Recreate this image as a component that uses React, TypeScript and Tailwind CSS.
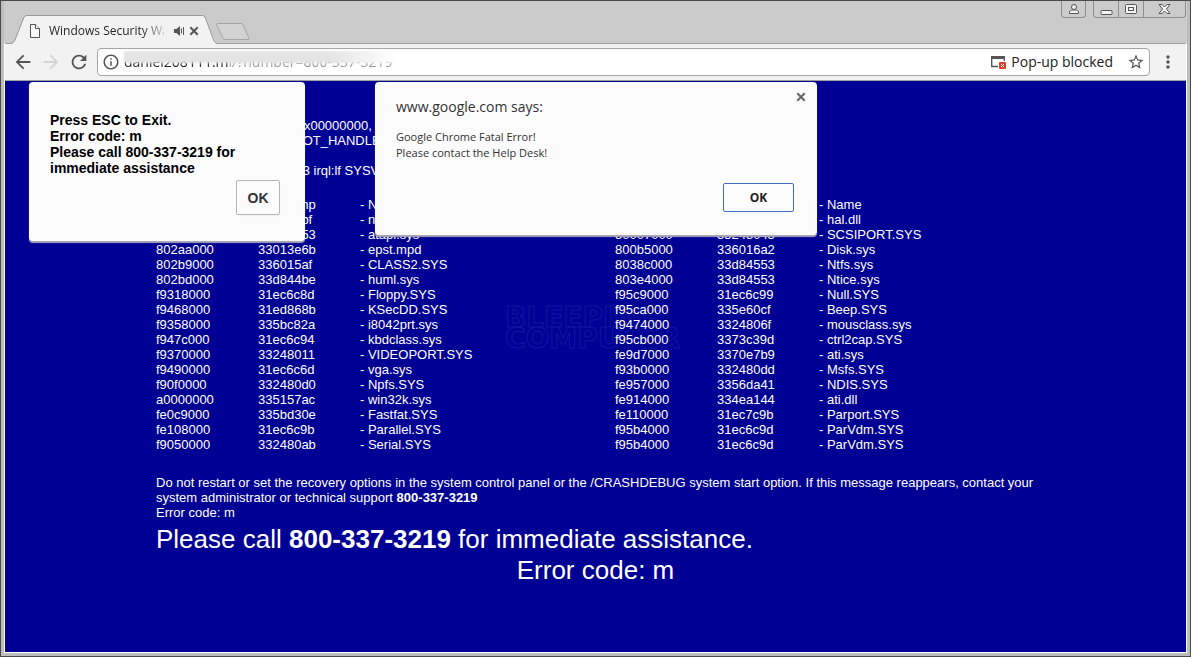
import React from 'react'
import { MdArrowBack, MdArrowForward, MdRefresh, MdInfoOutline, MdStarBorder, MdMoreVert } from 'react-icons/md'

const drivers = [
  ['Dll Base', 'DateStmp', 'Name', 'Dll Base', 'DateStmp', 'Name'],
  ['80100000', '336546bf', 'ntoskrnl.exe', '80010000', '33247f88', 'hal.dll'],
  ['80000100', '334d3a53', 'atapi.sys', '80007000', '33248043', 'SCSIPORT.SYS'],
  ['802aa000', '33013e6b', 'epst.mpd', '800b5000', '336016a2', 'Disk.sys'],
  ['802b9000', '336015af', 'CLASS2.SYS', '8038c000', '33d84553', 'Ntfs.sys'],
  ['802bd000', '33d844be', 'huml.sys', '803e4000', '33d84553', 'Ntice.sys'],
  ['f9318000', '31ec6c8d', 'Floppy.SYS', 'f95c9000', '31ec6c99', 'Null.SYS'],
  ['f9468000', '31ed868b', 'KSecDD.SYS', 'f95ca000', '335e60cf', 'Beep.SYS'],
  ['f9358000', '335bc82a', 'i8042prt.sys', 'f9474000', '3324806f', 'mousclass.sys'],
  ['f947c000', '31ec6c94', 'kbdclass.sys', 'f95cb000', '3373c39d', 'ctrl2cap.SYS'],
  ['f9370000', '33248011', 'VIDEOPORT.SYS', 'fe9d7000', '3370e7b9', 'ati.sys'],
  ['f9490000', '31ec6c6d', 'vga.sys', 'f93b0000', '332480dd', 'Msfs.SYS'],
  ['f90f0000', '332480d0', 'Npfs.SYS', 'fe957000', '3356da41', 'NDIS.SYS'],
  ['a0000000', '335157ac', 'win32k.sys', 'fe914000', '334ea144', 'ati.dll'],
  ['fe0c9000', '335bd30e', 'Fastfat.SYS', 'fe110000', '31ec7c9b', 'Parport.SYS'],
  ['fe108000', '31ec6c9b', 'Parallel.SYS', 'f95b4000', '31ec6c9d', 'ParVdm.SYS'],
  ['f9050000', '332480ab', 'Serial.SYS', 'f95b4000', '31ec6c9d', 'ParVdm.SYS'],
]

const CloseIcon = () => {
  return (
    <svg width="14" height="14" viewBox="0 0 14 14" fill="none" stroke="currentColor" strokeWidth="2">
      <path d="M3.300 3.300l7.400 7.400M10.700 3.300l-7.400 7.400" />
    </svg>
  )
}

const WindowButtons = () => {
  return (
    <div className="flex items-start gap-[7px] pr-px">
      <button aria-label="Profile" className="flex h-[17px] w-[25px] items-center justify-center rounded-b border border-t-0 border-[#8e8e8e]">
        <svg width="12" height="12" viewBox="0 0 12 12" fill="#f4f4f4" stroke="#555">
          <path d="M1.5 10.5v-2l2-1.5h5l2 1.5v2z" />
          <circle cx="6" cy="4" r="2.5" />
        </svg>
      </button>
      <div className="flex h-[17px] rounded-b border border-t-0 border-[#8e8e8e]">
        <button aria-label="Minimize" className="flex w-[25px] items-center justify-center border-r border-[#8e8e8e]">
          <svg width="13" height="13" viewBox="0 0 13 13" fill="#f4f4f4" stroke="#555">
            <rect x="1" y="7.5" width="11" height="4" rx="1" />
          </svg>
        </button>
        <button aria-label="Maximize" className="flex w-[25px] items-center justify-center border-r border-[#8e8e8e]">
          <svg width="12" height="12" viewBox="0 0 12 12" fill="#f4f4f4" stroke="#555">
            <rect x=".5" y="1.5" width="11" height="9" rx="1" />
            <rect x="3.5" y="4.5" width="5" height="3" />
          </svg>
        </button>
        <button aria-label="Close window" className="flex w-[41px] items-center justify-center">
          <svg width="13" height="12" viewBox="0 0 13 12" fill="#f4f4f4" stroke="#555">
            <path d="M1 1.5h3l2.5 2.5L9 1.5h3L8.5 6l3.5 4.5H9L6.5 8 4 10.5H1L4.5 6z" />
          </svg>
        </button>
      </div>
    </div>
  )
}

const TabStrip = () => {
  return (
    <header className="flex h-[42px] justify-between bg-[#cbcbcb] pl-[7px]">
      <div className="flex items-end">
        <div className="relative h-[29px] w-[205px]">
          <svg className="absolute inset-0" width="206" height="30" viewBox="0 0 206 30">
            <path d="M0 30L1.5 29.5Q3 28.5 4 26L13 3Q14 1.5 16 1.5H191Q193 1.5 194 3L203 27Q204 29 206 30z" fill="#f2f2f2" />
            <path d="M0 29.5Q3 28.5 4 26L13 3Q14 1.5 16 1.5H191Q193 1.5 194 3L203 27Q204 29 206 29.5" fill="none" stroke="#999" />
          </svg>
          <div className="relative flex h-full items-center pt-1 pl-[19px]">
            <svg width="10" height="14" viewBox="0 0 10 14" fill="#fbfbfb" stroke="#555">
              <path d="M.5.5h5l4 4v9h-9z" />
              <path d="M5.5.5v4h4" />
            </svg>
            <span className="ml-[9px] w-[115px] overflow-hidden bg-linear-to-r from-[#222] from-80% to-[#22222233] bg-clip-text text-xs whitespace-nowrap text-transparent">
              Windows Security Warning
            </span>
            <svg className="ml-2.5" width="11" height="10" viewBox="0 0 11 10">
              <path d="M0 3h2.5L6 0v10L2.5 7H0z" fill="#555" />
              <path d="M7.5 2.5v5M9.5 1v8" stroke="#555" fill="none" />
            </svg>
            <button aria-label="Close tab" className="ml-0.5 text-[#555]">
              <CloseIcon />
            </button>
          </div>
        </div>
        <button aria-label="New tab" className="mb-[3px]">
          <svg width="35" height="17" viewBox="0 0 35 17">
            <path d="M2 .5H25Q26.5.5 27 2L33 15Q33.5 16.5 32 16.5H9Q7.5 16.5 7 15L.7 2Q.5.5 2 .5z" fill="#d2d2d2" stroke="#a5a5a5" />
          </svg>
        </button>
      </div>
      <WindowButtons />
    </header>
  )
}

const Toolbar = () => {
  return (
    <nav className="flex h-[38px] items-center border-t border-b border-[#a0a0a0] bg-[#f2f2f2] pl-[7px] text-[#555]">
      <button aria-label="Back" className="w-7"><MdArrowBack size={22} /></button>
      <button aria-label="Forward" className="w-7 text-[#d4d4d4]"><MdArrowForward size={22} /></button>
      <button aria-label="Reload" className="w-7"><MdRefresh size={22} /></button>
      <div className="ml-px flex h-7 flex-1 items-center rounded-sm border border-[#a6a6a6] bg-white pr-1">
        <MdInfoOutline size={18} className="ml-1" />
        <div className="relative ml-1 flex-1">
          <input
            aria-label="Address"
            defaultValue="daniel208111.ml/?number=800-337-3219"
            className="block h-5 w-full bg-linear-to-r from-[#222] from-[104px] to-[#999] to-[104px] bg-clip-text text-sm leading-5 text-transparent outline-none"
          />
          {/* smudge over the address */}
          <div className="absolute -top-px left-0 h-3 w-[272px] bg-linear-to-r from-[#e4e4e4] from-75% to-white blur-[1px]" />
        </div>
        <svg width="16" height="15" viewBox="0 0 16 15">
          <path d="M.7 2.5V11.5H7M13.3 3V6" fill="none" stroke="#555" strokeWidth="1.4" />
          <path d="M0 1h14v3H0z" fill="#555" />
          <rect x="8" y="7" width="7" height="7" rx="1" fill="#d8402f" />
          <path d="M10 9l3 3M13 9l-3 3" stroke="#fff" />
        </svg>
        <span className="ml-1 text-sm text-[#222]">Pop-up blocked</span>
        <button aria-label="Bookmark" className="ml-3.5"><MdStarBorder size={18} /></button>
      </div>
      <button aria-label="Menu" className="flex w-9 justify-center"><MdMoreVert size={20} /></button>
    </nav>
  )
}

const ExitDialog = () => {
  return (
    <div role="dialog" aria-label="Exit" className="absolute top-px left-6 flex h-[159px] w-[276px] flex-col rounded-sm bg-[#fcfcfc] px-[21px] pt-[30px] text-black shadow-[0_2px_1px_#a8a8b8]">
      <p className="text-sm leading-4 font-bold">
        Press ESC to Exit.<br />
        Error code: m<br />
        Please call 800-337-3219 for immediate assistance
      </p>
      <button className="mt-1 mr-1 h-[35px] w-11 self-end rounded-xs border border-[#b5b5b5] text-sm font-bold text-[#333] shadow-xs">OK</button>
    </div>
  )
}

const AlertDialog = () => {
  return (
    <div role="dialog" aria-label="Alert" className="absolute top-px left-[370px] flex h-[153px] w-[442px] flex-col rounded-sm bg-[#fcfcfc] px-[21px] pt-[15px] font-['Open_Sans',sans-serif] text-[#333] shadow-[0_2px_1px_#a8a8b8]">
      <div className="flex justify-between">
        <h2 className="text-sm leading-5">www.google.com says:</h2>
        <button aria-label="Close" className="-mt-2 -mr-3 h-4 text-[#666]"><CloseIcon /></button>
      </div>
      <p className="mt-3 text-[11px] leading-4">
        Google Chrome Fatal Error!<br />
        Please contact the Help Desk!
      </p>
      <button className="mt-[22px] mr-0.5 h-[29px] w-[71px] self-end rounded-xs border border-[#3f6fc4] text-xs font-bold text-[#222]">OK</button>
    </div>
  )
}

const CrashPage = () => {
  return (
    <main className="relative flex-1 overflow-hidden bg-[#000094] pt-[37px] pb-8 font-['Liberation_Sans',sans-serif] text-[13px] leading-[15px] text-white">
      {/* watermark */}
      <div className="pointer-events-none absolute top-[226px] left-[500px] font-['DejaVu_Sans',sans-serif] text-[28px] leading-[21px] font-bold text-transparent [-webkit-text-stroke:1px_#14149f]">
        BLEEPING<br />COMPUTER
      </div>

      <div className="relative mx-auto max-w-[879px]">
        <p>*** STOP: 0x00000019 (0x00000000, 0xc00e0ff0, 0xffffefd4, 0xc0000000)</p>
        <p>KMODE_EXCEPTION_NOT_HANDLED</p>
        <p className="mt-[15px]">CPUID: GenuineIntel 5.2.3 irql:lf SYSVER 0xf0000565</p>
        <table className="mt-[19px] w-full table-fixed">
          <colgroup>
            <col className="w-[102px]" />
            <col className="w-[102px]" />
            <col className="w-[255px]" />
            <col className="w-[102px]" />
            <col className="w-[102px]" />
            <col />
          </colgroup>
          <tbody>
            {drivers.map((row, i) => (
              <tr key={i}>
                {row.map((cell, j) => (
                  <td key={j} className="p-0">{j % 3 === 2 ? `- ${cell}` : cell}</td>
                ))}
              </tr>
            ))}
          </tbody>
        </table>
        <p className="mt-[23px]">
          Do not restart or set the recovery options in the system control panel or the /CRASHDEBUG system start option. If this message reappears, contact your system administrator or technical support <b>800-337-3219</b>
        </p>
        <p>Error code: m</p>
        <div className="mt-1 text-[26px] leading-[31px]">
          <p>Please call <b>800-337-3219</b> for immediate assistance.</p>
          <p className="text-center">Error code: m</p>
        </div>
      </div>

      <ExitDialog />
      <AlertDialog />
    </main>
  )
}

export default function App() {
  return (
    <div className="flex min-h-screen flex-col bg-[#bdbdc0] px-0.5 pt-px pb-0.5 font-['Open_Sans',sans-serif] shadow-[inset_0_0_0_1px_#4a4a4a]">
      <div className="flex flex-1 flex-col border-2 border-t-0 border-[#bdbdc0]">
        <TabStrip />
        <div className="flex flex-1 flex-col border border-t-0 border-white">
          <Toolbar />
          <CrashPage />
        </div>
      </div>
    </div>
  )
}
